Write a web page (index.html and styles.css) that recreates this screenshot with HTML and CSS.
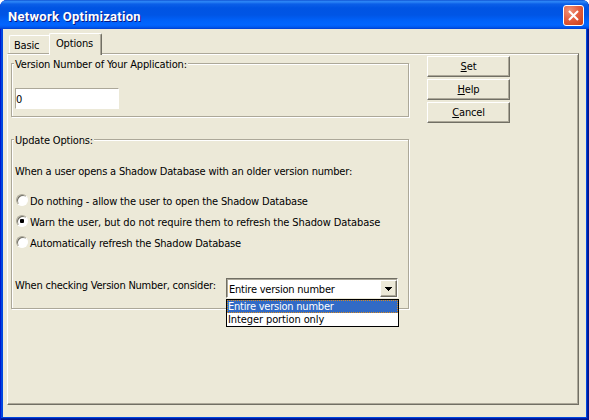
FILE: index.html
```html
<!DOCTYPE html>
<html lang="en">
<head>
<meta charset="utf-8">
<title>Network Optimization</title>
<link rel="stylesheet" href="styles.css">
</head>
<body>
<div class="window">
  <header class="titlebar">
    <h1>Network Optimization</h1>
    <button class="close" aria-label="Close"><svg width="11" height="11" viewBox="0 0 11 11"><path d="M1 1L10 10M10 1L1 10" stroke="#fff" stroke-width="2.1"/></svg></button>
  </header>
  <main class="client">
    <nav class="tabs"><div class="tab"><span>Basic</span></div><div class="tab active"><span>Options</span></div></nav>
    <div class="page">
      <div class="groups">
        <section class="group version">
          <h2>Version Number of Your Application:</h2>
          <div class="field">0</div>
        </section>
        <section class="group update">
          <h2>Update Options:</h2>
          <p class="intro">When a user opens a Shadow Database with an older version number:</p>
          <div class="radio"><i></i><span>Do nothing - allow the user to open the Shadow Database</span></div>
          <div class="radio checked"><i></i><span>Warn the user, but do not require them to refresh the Shadow Database</span></div>
          <div class="radio"><i></i><span>Automatically refresh the Shadow Database</span></div>
          <div class="consider">
            <span>When checking Version Number, consider:</span>
            <div class="combo">
              <span>Entire version number</span>
              <div class="arrow"><svg width="7" height="4" viewBox="0 0 7 4" shape-rendering="crispEdges"><path d="M0 0H7V1H6V2H5V3H4V4H3V3H2V2H1V1H0Z"/></svg></div>
              <div class="list">
                <div class="item selected">Entire version number</div>
                <div class="item integer">Integer portion only</div>
              </div>
            </div>
          </div>
        </section>
      </div>
      <div class="actions">
        <button><span><u>S</u>et</span></button>
        <button><span><u>H</u>elp</span></button>
        <button><span><u>C</u>ancel</span></button>
      </div>
    </div>
  </main>
</div>
</body>
</html>
```
FILE: styles.css
```css
* { box-sizing: border-box; }
body {
  margin: 0;
  background: #fff;
  color: #000;
  font: 11px/13px "DejaVu Sans Condensed", "DejaVu Sans", sans-serif;
  font-stretch: condensed;
  letter-spacing: -.17px;
  white-space: nowrap;
}
h1, h2, p { margin: 0; font-size: inherit; font-weight: normal; }
button { padding: 0; font: inherit; color: inherit; letter-spacing: inherit; }
.window {
  width: 589px;
  height: 420px;
  padding: 0 3px 3px;
  border-radius: 7px 7px 0 0;
  overflow: hidden;
  background: #0046e0;
  box-shadow: inset 1px 0 #0019cf, inset -1px -1px #00138c, inset -2px -2px #001ea0;
}
.titlebar {
  height: 29px;
  margin: 0 -3px;
  padding: 2px 5px 0 8px;
  display: flex;
  align-items: center;
  justify-content: space-between;
  background: linear-gradient(#0a45c8 0, #2a83f5 1px, #2a83f5 2px, #0b5fe8 4px, #0054e3 8px, #0055e5 15px, #0062fa 21px, #0265ff 25px, #005af0 27px, #003dd0 29px);
}
h1 {
  padding-top: 2px;
  color: #fff;
  font: bold 13px/16px Roboto, "Open Sans", sans-serif;
  letter-spacing: .28px;
  text-shadow: 1px 1px #0a1883;
}
.close {
  width: 21px;
  height: 21px;
  display: grid;
  place-items: center;
  border: 1px solid #fff;
  border-radius: 3px;
  background: radial-gradient(circle at 30% 25%, #f09478 0, #e46042 45%, #cc3c12 100%);
}
.client { height: 388px; padding: 4px 7px 0 4px; background: #ece9d8; }
.tabs { height: 20px; display: flex; align-items: flex-end; }
.tab {
  height: 18px;
  width: 40px;
  margin-left: 2px;
  padding: 3px 0 0 4px;
  border: 1px solid #fff;
  border-right: 0;
  border-bottom: 0;
  border-radius: 2px 0 0;
}
.tab.active {
  position: relative;
  width: 53px;
  height: 22px;
  margin: 0 0 -2px;
  padding: 3px 0 0 6px;
  border-right: 1px solid #716f64;
  border-radius: 2px 2px 0 0;
  box-shadow: inset -1px 0 #aca899;
  background: #ece9d8;
}
.page {
  width: 572px;
  height: 352px;
  padding: 2px 0 0 3px;
  display: flex;
  gap: 18px;
  border: solid;
  border-width: 1px;
  border-color: #aca899 #716f64 #716f64 #fff;
  box-shadow: inset 0 1px #fff, inset -1px -1px #aca899;
}
.groups { width: 398px; padding-top: 7px; }
.group {
  border: 1px solid #aca899;
  box-shadow: 1px 1px #fff, inset 1px 1px #fff;
}
.group h2 {
  width: max-content;
  height: 13px;
  margin: -6px 0 0 2px;
  padding: 0 1px;
  background: #ece9d8;
}
.version { height: 54px; }
.field {
  width: 104px;
  height: 21px;
  margin: 17px 0 0 3px;
  padding: 4px 0 0;
  border: 1px solid;
  border-color: #aca899 #fff #fff #aca899;
  background: #fff;
}
.update { height: 170px; margin-top: 22px; }
.intro { margin: 18px 0 17px 3px; letter-spacing: -.19px; }
.radio { height: 13px; margin: 0 0 8px 4px; display: flex; align-items: center; gap: 2px; }
.radio i {
  width: 12px;
  height: 12px;
  margin-top: -3px;
  display: grid;
  place-items: center;
  border: 1px solid;
  border-color: #aca899 #fff #fff #aca899;
  border-radius: 50%;
  background: #fff;
  box-shadow: inset 1px 1px #716f64;
}
.checked { letter-spacing: -.1px; }
.checked i::after { content: ""; width: 4px; height: 4px; border-radius: 1px; background: #000; }
.consider { height: 20px; margin: 28px 0 0 3px; display: flex; justify-content: space-between; }
.consider > span { padding-top: 1px; letter-spacing: -.23px; }
.combo {
  position: relative;
  width: 172px;
  height: 20px;
  margin-right: 10px;
  padding-left: 2px;
  display: flex;
  justify-content: space-between;
  border: 1px solid;
  border-color: #716f64 #fff #fff #716f64;
  box-shadow: inset 1px 1px #aca899;
  background: #fff;
  letter-spacing: -.22px;
}
.combo > span { padding-top: 4px; }
.arrow {
  width: 17px;
  height: 17px;
  margin-top: 1px;
  display: grid;
  place-items: center;
  background: #ece9d8;
  border: 1px solid;
  border-color: #fff #716f64 #716f64 #fff;
  box-shadow: inset -1px -1px #aca899;
}
.list { position: absolute; left: -1px; top: 20px; width: 173px; border: 1px solid #000; background: #fff; }
.item { height: 13px; padding-left: 1px; }
.selected { color: #fff; background: #316ac5; outline: 1px dotted #d98b1f; outline-offset: -1px; }
.integer { letter-spacing: -.1px; }
.actions { display: flex; flex-direction: column; gap: 2px; }
.actions button {
  width: 83px;
  height: 21px;
  background: #ece9d8;
  border: 1px solid;
  border-color: #fff #716f64 #716f64 #fff;
  box-shadow: inset -1px -1px #aca899;
}
.actions u { text-underline-offset: 1px; }
```
